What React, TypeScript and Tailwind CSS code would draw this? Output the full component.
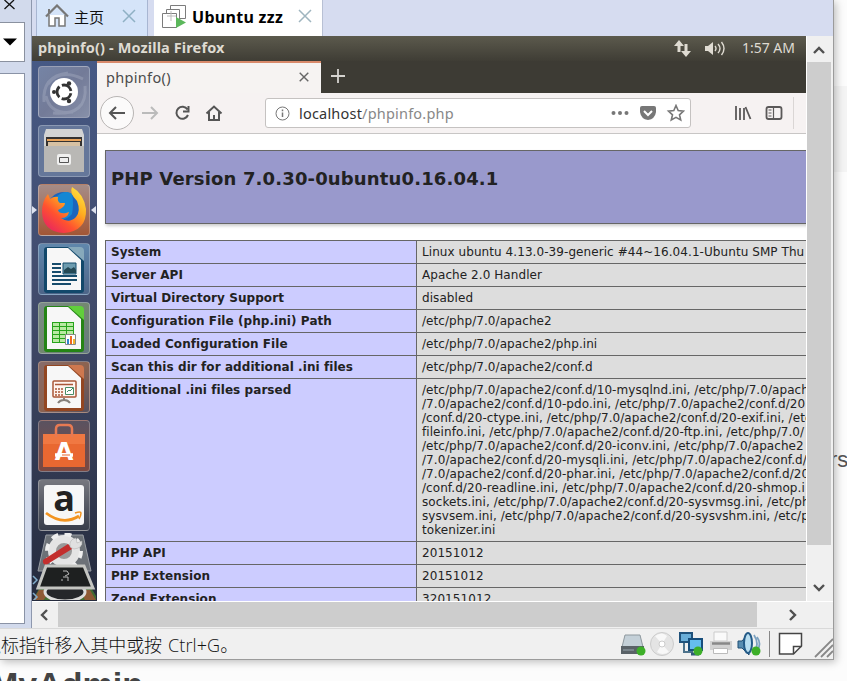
import type { ReactNode } from "react";

const INI_LINES = [
  "/etc/php/7.0/apache2/conf.d/10-mysqlnd.ini, /etc/php/7.0/apach",
  "/7.0/apache2/conf.d/10-pdo.ini, /etc/php/7.0/apache2/conf.d/20",
  "/conf.d/20-ctype.ini, /etc/php/7.0/apache2/conf.d/20-exif.ini, /etc",
  "fileinfo.ini, /etc/php/7.0/apache2/conf.d/20-ftp.ini, /etc/php/7.0/",
  "/etc/php/7.0/apache2/conf.d/20-iconv.ini, /etc/php/7.0/apache2",
  "/7.0/apache2/conf.d/20-mysqli.ini, /etc/php/7.0/apache2/conf.d/",
  "/7.0/apache2/conf.d/20-phar.ini, /etc/php/7.0/apache2/conf.d/20",
  "/conf.d/20-readline.ini, /etc/php/7.0/apache2/conf.d/20-shmop.i",
  "sockets.ini, /etc/php/7.0/apache2/conf.d/20-sysvmsg.ini, /etc/ph",
  "sysvsem.ini, /etc/php/7.0/apache2/conf.d/20-sysvshm.ini, /etc/p",
  "tokenizer.ini",
];

const ROWS: [string, string[]][] = [
  ["System", ["Linux ubuntu 4.13.0-39-generic #44~16.04.1-Ubuntu SMP Thu"]],
  ["Server API", ["Apache 2.0 Handler"]],
  ["Virtual Directory Support", ["disabled"]],
  ["Configuration File (php.ini) Path", ["/etc/php/7.0/apache2"]],
  ["Loaded Configuration File", ["/etc/php/7.0/apache2/php.ini"]],
  ["Scan this dir for additional .ini files", ["/etc/php/7.0/apache2/conf.d"]],
  ["Additional .ini files parsed", INI_LINES],
  ["PHP API", ["20151012"]],
  ["PHP Extension", ["20151012"]],
  ["Zend Extension", ["320151012"]],
];

function CloseMark({ className }: { className: string }) {
  return (
    <svg viewBox="0 0 14 14" className={className} fill="none" stroke="currentColor">
      <path d="M1 1l12 12M13 1L1 13" />
    </svg>
  );
}

function LibraryPane() {
  return (
    <div className="flex h-full w-8 shrink-0 flex-col border-r border-[#8e98ae] bg-[#d2daec]">
      <svg viewBox="0 0 25 22" className="h-[22px] w-[25px] shrink-0">
        <path d="M4.500 0l10 9M14 0l-9.500 9" stroke="#111" strokeWidth="1.300" />
      </svg>
      <div className="flex h-10 w-[25px] shrink-0 items-center border border-l-0 border-[#8a919f] bg-white">
        <svg viewBox="0 0 14 8" className="ml-[3px] h-2 w-[14px]">
          <path d="M0 0.500h14l-7 7z" fill="#000" />
        </svg>
      </div>
      <div className="mt-[11px] h-[551px] w-[25px] shrink-0 border border-l-0 border-[#8a93a6] bg-white" />
    </div>
  );
}

function TabStrip() {
  return (
    <div className="flex h-9 shrink-0 bg-[#d6dcf0] pl-1">
      <div className="flex w-[112px] items-center border-r border-l border-[#a8b6d2] bg-[#d5e4f9]">
        <svg viewBox="0 0 24 24" className="mt-[-4px] ml-2 h-6 w-6 shrink-0" fill="none">
          <path d="M4 11v11h6v-8h4v8h6V11" fill="#fff" stroke="#777" strokeWidth="1.500" />
          <path d="M1 12.500L12 1.500l11 11" stroke="#777" strokeWidth="2.200" />
          <path d="M4 5v4" stroke="#777" strokeWidth="2" />
        </svg>
        <span className="mt-[-4px] ml-[5px] w-8 font-['Noto_Sans_CJK_SC',sans-serif] text-[15px] leading-none text-[#111]">主页</span>
        <CloseMark className="mt-[-4px] ml-[16px] h-[14px] w-[14px] stroke-[1.5] text-[#8fb0c4]" />
      </div>
      <div className="ml-[6px] flex w-[169px] items-center border-r border-[#b8c0d4] bg-white">
        <svg viewBox="0 0 24 24" className="mt-[-5px] ml-2 h-6 w-6 shrink-0" fill="none" stroke="#7c7c7c">
          <path d="M8.500 1.500h15v13h-15z" fill="#fff" />
          <path d="M4.500 5.500h13v13h-13z" fill="#fff" />
          <path d="M.5 9.500h14v14H.5z" fill="#fff" />
          <path d="M5 12h9M9 7v10" stroke="#bbb" />
          <path d="M14 13l10 5.500-10 5.500z" fill="#5cb85c" stroke="none" />
        </svg>
        <span className="mt-[-3px] ml-[6px] w-[93px] font-['Noto_Sans',sans-serif] text-[16px] leading-none font-bold tracking-[0.3px] whitespace-nowrap text-black">Ubuntu zzz</span>
        <CloseMark className="mt-[-4px] ml-[13px] h-[14px] w-[14px] stroke-[1.5] text-[#9fb5bf]" />
      </div>
    </div>
  );
}

function GuestTitleBar() {
  return (
    <div className="flex h-[25px] shrink-0 items-center bg-linear-to-b from-[#5c5a4d] to-[#3f3d35] pr-[11px] pb-[2px] pl-[6px] font-['Noto_Sans',sans-serif] text-[#dfdbd2]">
      <span className="text-[14.500px] leading-none font-bold tracking-[0.120px] whitespace-nowrap">phpinfo() - Mozilla Firefox</span>
      <svg viewBox="0 0 17 18" className="ml-auto h-[18px] w-[17px]" fill="#dfdbd2">
        <path d="M5 1l5 6H6.500v6h-3V7H0zM12 18l-5-6h3.500V5h3v7H17z" />
      </svg>
      <svg viewBox="0 0 21 18" className="ml-[14px] h-[18px] w-[21px]" fill="none" stroke="#dfdbd2" strokeWidth="1.400">
        <path d="M0 7h3l5-4v13l-5-4H0z" fill="#dfdbd2" stroke="none" />
        <path d="M10 7q2 2.500 0 5M13 5q4 4.500 0 9M16.500 3q5 6.500 0 13" />
      </svg>
      <span className="ml-[16px] text-[14px] leading-none whitespace-nowrap">1:57 AM</span>
    </div>
  );
}

function Tile({ tone, children }: { tone: string; children: ReactNode }) {
  return (
    <div className={"h-[52px] w-[52px] shrink-0 rounded-[4px] border border-white/25 " + tone}>
      <svg viewBox="0 0 52 52" className="-m-px h-[52px] w-[52px] overflow-visible" fill="none">
        {children}
      </svg>
    </div>
  );
}

function Page({ edge, corner }: { edge: string; corner: string }) {
  return (
    <>
      <path d="M9 4h23l14 12v31a3 3 0 0 1-3 3H9a3 3 0 0 1-3-3V7a3 3 0 0 1 3-3z" fill={edge} />
      <path d="M30 4h12a4 4 0 0 1 4 4v10z" fill={corner} />
      <path d="M9 5h21l13 12v30H9z" fill="#f7f7f7" />
    </>
  );
}

function Launcher() {
  return (
    <div className="flex w-[65px] shrink-0 flex-col items-center gap-[7px] overflow-hidden bg-linear-to-b from-[#465985] via-[#414b6b] via-45% to-[#252b3d] pt-[5px] pr-[1px]">
      <Tile tone="bg-linear-to-br from-[#7584a5] via-[#737b98] to-[#8790a9]">
        <path d="M6 36Q4 10 30 7M15 47Q50 50 47 20M10 18Q22 2 45 13M8 30Q12 49 35 46" stroke="#b8bfd0" strokeOpacity=".3" strokeWidth="3" />
        <circle cx="26" cy="26" r="14" fill="#fff" />
        <circle cx="26" cy="26" r="7" stroke="#333" strokeWidth="2.800" strokeDasharray="12 2.660" strokeDashoffset="-1.300" />
        <circle cx="16" cy="26" r="2" fill="#333" />
        <circle cx="31" cy="17.500" r="2.200" fill="#333" />
        <circle cx="31" cy="35" r="2.200" fill="#333" />
      </Tile>
      <Tile tone="bg-[#65779a]">
        <path d="M8 4h36l2 6v37H6V10z" fill="#d3d4d3" />
        <path d="M8 12h36v11H8z" fill="#343230" />
        <path d="M9 14h34v2H9z" fill="#e8a35a" />
        <path d="M10 17h32v6H10z" fill="#d6c1a3" />
        <path d="M6 21h40v26H6z" fill="#b9b8b5" />
        <rect x="19" y="29" width="14" height="11" rx="2" fill="#f0f0ef" />
        <path d="M21.500 32.500h9v5h-9z" fill="#eee" stroke="#555" />
      </Tile>
      <Tile tone="bg-linear-to-b from-[#a58c87] to-[#a15635]">
        <defs>
          <linearGradient id="foxFlame" x1="1" y1="0" x2="0.200" y2="1">
            <stop offset="0" stopColor="#fff04a" />
            <stop offset=".4" stopColor="#ffad20" />
            <stop offset=".7" stopColor="#ff522f" />
            <stop offset="1" stopColor="#e82560" />
          </linearGradient>
        </defs>
        <circle cx="26" cy="25" r="17" fill="#1b64bd" />
        <path d="M18 13q9-8 16-3 2 9 0 20-8 9-16 2z" fill="#1487d4" />
        <path d="M34 3q12 7 14 22 1 22-22 24Q5 48 4 28q0-11 6-18l2 5q4-3 8-2-1 4 2 6h5q0 4-7 7 1 4 8 3l3-1q-1 6-8 6 8 6 15-1 5-6 1-16-8-8-5-14z" fill="url(#foxFlame)" />
        <path d="M-6 22v8l5-4zM58 22v8l-5-4z" fill="#dde2ef" />
      </Tile>
      <Tile tone="bg-linear-to-b from-[#6087ac] to-[#4d6588]">
        <Page edge="#12486b" corner="#87a9bb" />
        <path d="M14 21h9M14 25h9M14 29h9M14 33h25M14 37h25M14 41h19" stroke="#174c6c" strokeWidth="2" />
        <path d="M25 20h13v11H25z" fill="#6d9caf" stroke="#174c6c" />
        <path d="M26 30v-3l4-3 3 2 3-2 2 3v3z" fill="#244854" />
      </Tile>
      <Tile tone="bg-linear-to-br from-[#7c898b] via-[#72886f] to-[#637881]">
        <Page edge="#248415" corner="#61cf3b" />
        <path d="M14 20h22v21H14z" fill="#26a41a" />
        <path d="M15 21h6v3h-6zm7 0h6v3h-6zm7 0h6v3h-6zM15 25h6v3h-6zm7 0h6v3h-6zm7 0h6v3h-6zM15 29h6v3h-6zm7 0h6v3h-6zm7 0h6v3h-6zM15 33h6v3h-6zm7 0h6v3h-6zM15 37h6v3h-6zm7 0h6v3h-6z" fill="#b9e9a3" />
        <path d="M27.500 32.500h10v10h-10z" fill="#fff" stroke="#888" />
        <path d="M29 37h2v5h-2z" fill="#3284cf" />
        <path d="M32 34h2v8h-2z" fill="#ee6920" />
        <path d="M35 37h2v5h-2z" fill="#f0b52b" />
      </Tile>
      <Tile tone="bg-linear-to-br from-[#876b69] via-[#8c6350] to-[#54505e]">
        <Page edge="#934621" corner="#ce784f" />
        <path d="M26 37v3m-6 2q2-3 6-3t6 3" stroke="#85807b" strokeWidth="2" />
        <rect x="15" y="20" width="23" height="16" rx="1" fill="#fff4ef" stroke="#aa5738" strokeWidth="1.500" />
        <path d="M17 23.500h18" stroke="#aa5738" strokeWidth="1.500" />
        <path d="M17 28h8M17 31h8M17 34h8" stroke="#aa5738" strokeWidth="1.500" strokeDasharray="2 1" />
        <path d="M27.500 26.500h8v7h-8z" fill="#fff" stroke="#478d66" />
        <path d="M29 31l2-2 1 1 3-3" stroke="#478d66" />
      </Tile>
      <Tile tone="bg-linear-to-b from-[#5a5260] to-[#7c4840]">
        <path d="M5 14h42v33H5z" fill="#e96831" />
        <path d="M5 14h42v10H5z" fill="#f07842" />
        <path d="M18 17V9q0-4 4-4h8q4 0 4 4v8" stroke="#e77a53" strokeWidth="2.500" />
        <text x="26" y="40" textAnchor="middle" fill="#fff" fontFamily="DejaVu Sans, sans-serif" fontWeight="bold" fontSize="24">A</text>
        <path d="M17 35h18" stroke="#fff" strokeWidth="3.500" />
        <path d="M24 35h8" stroke="#e96831" strokeWidth="1" />
      </Tile>
      <Tile tone="bg-linear-to-b from-[#77787f] to-[#393e4b]">
        <rect x="6" y="6" width="40" height="40" rx="3" fill="#f7f7f7" />
        <text x="26" y="32" textAnchor="middle" fill="#222" fontFamily="Open Sans, sans-serif" fontWeight="bold" fontSize="36">a</text>
        <path d="M8 34q17 13 33 3" stroke="#f29420" strokeWidth="2.800" />
        <path d="M37 34q6-2 6 0 0 3-2 6" stroke="#f29420" strokeWidth="1.500" />
      </Tile>
      <svg viewBox="0 0 65 67" className="mt-[-5px] h-[67px] w-[65px] shrink-0" fill="none">
        <path d="M14 2h37l8 36H6z" fill="#6c7177" stroke="#999da4" />
        <circle cx="32" cy="18" r="12" fill="#999" stroke="#e4e4e4" strokeWidth="8" />
        <circle cx="32" cy="18" r="17" stroke="#eee" strokeWidth="4" strokeDasharray="7 6.350" />
        <path d="M11 27L36 11l4 5L14 32q-4-1-3-5z" fill="#c32e2d" />
        <path d="M38 14q-1-8 6-9l1 5 5-2q1 7-8 8z" fill="#e0e0e0" stroke="#aaa" strokeWidth=".5" />
        <path d="M3 63l8-15h44l9 15v6H3z" fill="#416c31" />
        <path d="M7 57h12l-9 12H0zM48 57h10l7 12H54z" fill="#8e5a35" />
        <ellipse cx="33" cy="59" rx="20" ry="9" fill="#25272b" stroke="#ddd" strokeWidth="3" />
        <path d="M14 33h38l9 22H6z" fill="#1e2020" stroke="#c5c6c2" strokeWidth="3" />
        <path d="M31 38h4l2 3-4 2m-2 1h5v4m-5-1h-2" stroke="#bbb" />
        <path d="M1 43l4 4-4 4M1 60l4 4-4 4" stroke="#83aecd" strokeWidth="1.500" />
      </svg>
    </div>
  );
}

function BrowserTabs() {
  return (
    <div className="flex h-8 shrink-0 bg-[#3d3b34]">
      <div className="flex w-[224px] items-center border-t-2 border-[#d98a6b] bg-[#f6f3f2] pr-[12px] pb-[2px] pl-[9px]">
        <span className="font-['Noto_Sans',sans-serif] text-[14.500px] leading-none tracking-[0.320px] text-[#4b4b4b]">phpinfo()</span>
        <CloseMark className="ml-auto h-[10px] w-[10px] stroke-2 text-[#666]" />
      </div>
      <svg viewBox="0 0 14 14" className="mt-2 ml-[10px] h-[14px] w-[14px]" stroke="#d5d3cf" strokeWidth="1.800">
        <path d="M7 0v14M0 7h14" />
      </svg>
    </div>
  );
}

function NavBar() {
  return (
    <div className="flex h-[41px] shrink-0 items-center border-b border-[#c8c6c5] bg-[#f6f2f2]">
      <svg viewBox="0 0 168 40" className="h-10 w-[168px] shrink-0" fill="none" stroke="#555" strokeWidth="2">
        <circle cx="20" cy="20" r="16.500" fill="#fbfafa" stroke="#b8b5b4" strokeWidth="1" />
        <path d="M28 20H13m6-6l-6 6 6 6" />
        <path d="M45 20h15m-6-6l6 6-6 6" stroke="#bbb" />
        <path d="M90.500 16.500A6 6 0 1 0 91 22M91.500 13v5.500H86" />
        <path d="M109.500 20.500l7.500-7 7.500 7M112 19v8h10v-8M117 27v-5" />
      </svg>
      <div className="flex h-[30px] w-[426px] shrink-0 items-center rounded-[3px] border border-[#c5c2c1] bg-white pr-[5px] pl-[9px] text-[#777]">
        <svg viewBox="0 0 15 15" className="h-[15px] w-[15px]" fill="none" stroke="#777">
          <circle cx="7.500" cy="7.500" r="6.500" />
          <path d="M7.500 6.500V11M7.500 3.500v1.700" strokeWidth="1.500" />
        </svg>
        <span className="ml-[9px] font-['Noto_Sans',sans-serif] text-[14.500px] leading-none tracking-[0.200px] whitespace-nowrap"><span className="text-[#333]">localhost</span><span className="text-[#888]">/phpinfo.php</span></span>
        <svg viewBox="0 0 74 18" className="ml-auto h-[18px] w-[74px]" fill="#777">
          <circle cx="2.500" cy="9" r="2" />
          <circle cx="9" cy="9" r="2" />
          <circle cx="15.500" cy="9" r="2" />
          <path d="M31 2h12q2 0 2 2v4q-1 7-8 8-7-1-8-8V4q0-2 2-2z" />
          <path d="M33 7l4 4 4-4" fill="none" stroke="#fff" strokeWidth="2" />
          <path d="M65 1.500l2.200 5 5.300.6-4 3.700 1.200 5.200-4.700-2.700-4.700 2.700 1.200-5.200-4-3.700 5.300-.6z" fill="none" stroke="#777" strokeWidth="1.600" />
        </svg>
      </div>
      <svg viewBox="0 0 115 40" className="h-10 w-[115px] shrink-0" fill="none" stroke="#5b5959" strokeWidth="1.800">
        <path d="M45 13v14M49 15v12M53 15v12M54.500 14l5 12" />
        <rect x="75.500" y="14" width="15" height="12" rx="2" />
        <path d="M82.500 14v12M77.500 17h3M77.500 20h3M77.500 23h3" strokeWidth="1.200" />
        <path d="M102.500 4v32" stroke="#dad6d5" strokeWidth="1" />
      </svg>
    </div>
  );
}

function PhpInfo() {
  return (
    <div className="min-h-0 flex-1 overflow-hidden bg-white pt-4 pl-2 font-['DejaVu_Sans',sans-serif] text-[#222]">
      <div className="h-[74px] w-[934px] border border-[#666] bg-[#9999cc] px-[5px] pt-[17px] shadow-[1px_2px_3px_#cccccc]">
        <h1 className="text-[18px] leading-[21px] font-bold tracking-[0.150px]">PHP Version 7.0.30-0ubuntu0.16.04.1</h1>
      </div>
      <div className="mt-4 w-[934px] border-t border-l border-[#666] text-[12px] leading-[14px] tracking-[0.070px] whitespace-nowrap">
        {ROWS.map(([name, lines]) => (
          <div key={name} className="flex border-b border-[#666]">
            <div className="w-[311px] shrink-0 border-r border-[#666] bg-[#ccccff] px-[5px] py-1 font-bold">{name}</div>
            <div className="flex-1 bg-[#dddddd] px-[5px] py-1">
              {lines.map((line) => (
                <div key={line}>{line}</div>
              ))}
            </div>
          </div>
        ))}
      </div>
    </div>
  );
}

function Chevron({ d, className }: { d: string; className: string }) {
  return (
    <svg viewBox="0 0 12 12" className={className} fill="none" stroke="#505050" strokeWidth="2.400">
      <path d={d} />
    </svg>
  );
}

function VerticalScroll() {
  return (
    <div className="flex w-[27px] shrink-0 flex-col items-center border-l border-white bg-[#f0f0f0] pr-[2px]">
      <Chevron d="M1 10l5-5 5 5" className="my-[7px] h-3 w-3 shrink-0" />
      <div className="h-[483px] w-6 shrink-0 bg-[#cdcdcd]" />
      <Chevron d="M1 3l5 5 5-5" className="mt-[37px] h-3 w-3 shrink-0" />
    </div>
  );
}

function StatusBar() {
  return (
    <div className="flex h-[31px] shrink-0 items-center overflow-hidden border-t border-[#d9d9d9] bg-[#f0f0f0]">
      <div className="flex w-[300px] justify-start">
        <span className="ml-[-17px] font-['Noto_Sans_CJK_SC',sans-serif] text-[18px] leading-none font-light tracking-[-0.100px] whitespace-nowrap text-[#111]">
          鼠标指针移入其中或按
          <span className="ml-[6px] font-['Open_Sans',sans-serif] tracking-[0.100px]">Ctrl+G</span>。
        </span>
      </div>
      <svg viewBox="0 0 214 29" className="ml-auto h-[29px] w-[214px] shrink-0" fill="none">
        <path d="M6 5h15l3 12H3z" fill="#c4d0d8" stroke="#8e989e" />
        <path d="M2 16h23v8H2z" fill="#5a6268" />
        <path d="M4 20h11" stroke="#9aa8b0" />
        <circle cx="43" cy="14" r="11.500" fill="#e4e4e4" stroke="#ccc" />
        <path d="M43 14L36 6q7-5 12 0zM43 14l7 8q-7 4-12 0z" fill="#f8f8f8" />
        <circle cx="43" cy="14" r="3" fill="#fff" stroke="#ccc" />
        <path d="M61 3h12v9H61z" fill="#6aaed8" stroke="#20527b" strokeWidth="2" />
        <path d="M65 13v9h9" stroke="#4d738c" strokeWidth="2" />
        <path d="M70 9h13v11H70z" fill="#65bdee" stroke="#174e7c" strokeWidth="2" />
        <path d="M72 24h8" stroke="#315a78" strokeWidth="3" />
        <path d="M95 2h13v9H95z" fill="#fafafa" stroke="#ccc" />
        <path d="M91 11h22v9H91z" fill="#d2d2d2" />
        <path d="M93 13.500h18" stroke="#888" strokeWidth="2.500" />
        <path d="M94.500 18.500h14v5h-14z" fill="#fff" stroke="#bbb" />
        <path d="M119 11h4l7-8v22l-7-7h-4z" fill="#588db1" stroke="#1f4e75" />
        <ellipse cx="129" cy="13" rx="4" ry="10" fill="#b8def1" stroke="#245b88" strokeWidth="2" />
        <path d="M135 5q6 9 0 18M138 7q5 7 0 14" stroke="#7ba1c0" strokeWidth="1.800" />
        <g fill="#3daf29">
          <circle cx="22" cy="21" r="4.500" />
          <circle cx="79" cy="21" r="4.500" />
          <circle cx="137" cy="21" r="4.500" />
        </g>
        <path d="M150.500 1v26" stroke="#888" />
        <path d="M160.500 3.500h22V16l-8 8h-14z" fill="#fff" stroke="#454545" strokeWidth="1.500" />
        <path d="M174.500 24v-7.500h8" stroke="#454545" strokeWidth="1.500" />
        <path d="M196 27l18-18M202 27l12-12M208 27l6-6" stroke="#888" strokeWidth="1.800" />
      </svg>
    </div>
  );
}

export default function App() {
  return (
    <div className="flex h-[681px] w-[847px] flex-col overflow-hidden bg-[#fcfcfc]">
      <div className="flex h-[660px] shrink-0">
        <div className="z-10 flex w-[834px] shrink-0 flex-col border-r border-b border-[#9b9b9b] bg-[#f0f0f0] shadow-[2px_2px_8px_rgba(0,0,0,0.25)]">
          <div className="flex h-[628px] shrink-0">
            <LibraryPane />
            <div className="flex min-w-0 flex-1 flex-col">
              <TabStrip />
              <div className="flex h-[565px] shrink-0">
                <div className="flex w-[774px] shrink-0 flex-col overflow-hidden">
                  <GuestTitleBar />
                  <div className="flex min-h-0 flex-1">
                    <Launcher />
                    <div className="flex w-[709px] shrink-0 flex-col">
                      <BrowserTabs />
                      <NavBar />
                      <PhpInfo />
                    </div>
                  </div>
                </div>
                <VerticalScroll />
              </div>
              <div className="flex h-[26px] items-center border-t border-white bg-[#f0f0f0]">
                <Chevron d="M9 1L4 6l5 5" className="mr-[8px] ml-[6px] h-3 w-3 shrink-0" />
                <div className="h-[25px] w-[699px] bg-[#cdcdcd]" />
                <Chevron d="M3 1l5 5-5 5" className="ml-[30px] h-3 w-3 shrink-0" />
              </div>
            </div>
          </div>
          <StatusBar />
        </div>
        <div className="flex w-[13px] flex-col overflow-hidden pt-[86px]">
          <div className="h-[86px] shrink-0 bg-[#f4f4f4]" />
          <span className="mt-[277px] -ml-1 font-['Liberation_Sans',sans-serif] text-[22px] leading-none whitespace-nowrap text-[#555]">rs</span>
        </div>
      </div>
      <div className="h-[21px] overflow-hidden">
        <span className="ml-[-10px] block pt-[7px] font-['Liberation_Sans',sans-serif] text-[34px] leading-[34px] font-bold text-[#444]">MyAdmin</span>
      </div>
    </div>
  );
}
